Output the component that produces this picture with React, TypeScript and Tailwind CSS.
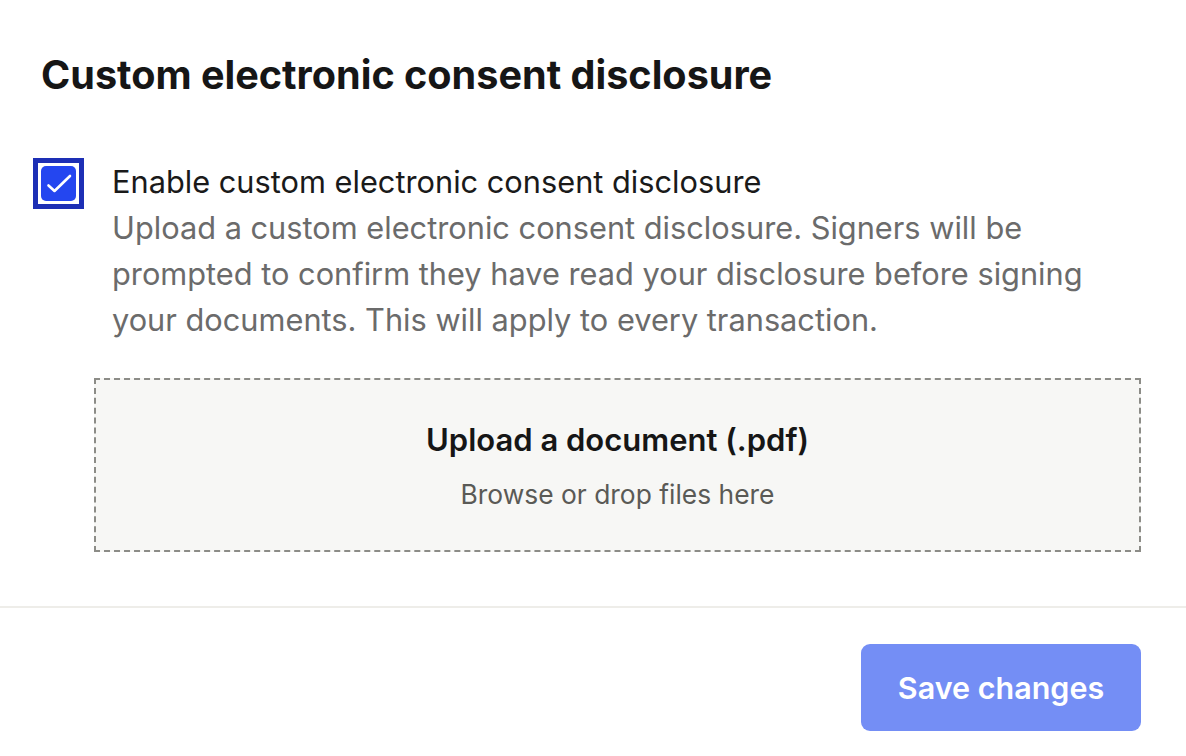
import React from 'react';

export default function App() {
  return (
    <div className="min-h-screen bg-white font-['Inter','Noto_Sans',sans-serif] text-[#161616]">
      {/* Settings body */}
      <div className="pl-[41px] pr-[45px] pt-[53px] pb-[54px]">
        <h1 className="text-[39.6px] leading-[44px] font-bold">
          Custom electronic consent disclosure
        </h1>

        <div className="mt-[62px] flex items-start">
          {/* Checkbox with focus ring */}
          <div className="-ml-[8px] mt-[-1px] shrink-0 border-[5px] border-[#1d2fb5] p-[3px]">
            <div className="h-[35px] w-[35px] rounded-[5px] bg-[#2446f0]">
              <svg viewBox="0 0 35 35" className="h-[35px] w-[35px]" fill="none" stroke="white" strokeWidth="2.6" strokeLinecap="round" strokeLinejoin="round">
                <path d="M7.5 19.5l6 5.5L29 10" />
              </svg>
            </div>
          </div>
          <div className="ml-[28px]">
            <div className="text-[30.75px] leading-[46px] text-[#1a1a1a]">
              Enable custom electronic consent disclosure
            </div>
            <p className="text-[30.75px] leading-[46px] text-[#6b6b6b]">
              Upload a custom electronic consent disclosure. Signers will be prompted to confirm they have read your disclosure before signing your documents. This will apply to every transaction.
            </p>
          </div>
        </div>

        {/* Drop zone */}
        <div className="ml-[53px] mt-[35px] flex h-[174px] flex-col items-center justify-center border-2 border-dashed border-[#8c8c87] bg-[#f7f7f5]">
          <div className="text-[31px] leading-[38px] font-semibold text-[#161616]">
            Upload a document (.pdf)
          </div>
          <div className="mt-[19px] text-[26.4px] leading-[32px] text-[#5a5a56]">
            Browse or drop files here
          </div>
        </div>
      </div>

      {/* Footer */}
      <div className="flex justify-end border-t-2 border-[#eeede9] pr-[45px] pt-[36px]">
        <button className="h-[87px] w-[280px] rounded-[9px] bg-[#748ef5] text-[30.5px] font-semibold text-white">
          Save changes
        </button>
      </div>
    </div>
  );
}
